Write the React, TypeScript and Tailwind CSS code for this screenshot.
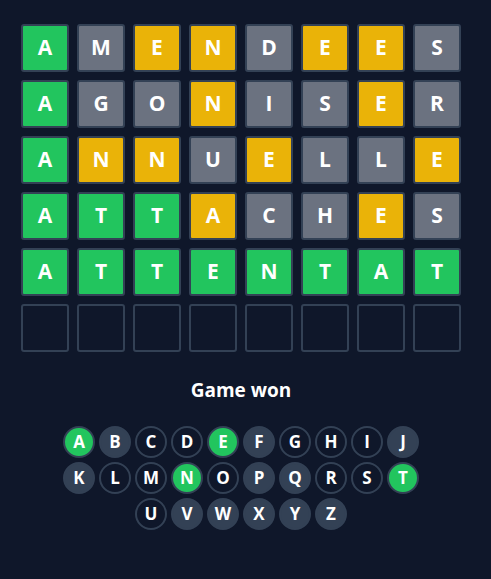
import React from "react";

type S = "g" | "y" | "x" | "e";

const rows: { w: string; s: S[] }[] = [
  { w: "AMENDEES", s: ["g", "x", "y", "y", "x", "y", "y", "x"] },
  { w: "AGONISER", s: ["g", "x", "x", "y", "x", "x", "y", "x"] },
  { w: "ANNUELLE", s: ["g", "y", "y", "x", "y", "x", "x", "y"] },
  { w: "ATTACHES", s: ["g", "g", "g", "y", "x", "x", "y", "x"] },
  { w: "ATTENTAT", s: ["g", "g", "g", "g", "g", "g", "g", "g"] },
  { w: "        ", s: ["e", "e", "e", "e", "e", "e", "e", "e"] },
];

const tileBg: Record<S, string> = {
  g: "bg-[#22c55e]",
  y: "bg-[#eab308]",
  x: "bg-[#6b7280]",
  e: "bg-transparent",
};

type K = "g" | "o" | "f";
const kb: [string, K][][] = [
  [["A", "g"], ["B", "f"], ["C", "o"], ["D", "o"], ["E", "g"], ["F", "f"], ["G", "o"], ["H", "o"], ["I", "o"], ["J", "f"]],
  [["K", "f"], ["L", "o"], ["M", "o"], ["N", "g"], ["O", "o"], ["P", "f"], ["Q", "f"], ["R", "o"], ["S", "o"], ["T", "g"]],
  [["U", "o"], ["V", "f"], ["W", "f"], ["X", "f"], ["Y", "f"], ["Z", "f"]],
];

const keyBg: Record<K, string> = {
  g: "bg-[#22c55e]",
  o: "bg-transparent",
  f: "bg-[#334155]",
};

export default function App() {
  return (
    <div
      className="min-h-screen bg-[#0f172a] pt-[24px] text-white"
      style={{ fontFamily: '"Open Sans", "Noto Sans", sans-serif' }}
    >
      <div className="ml-[21px] w-[440px] flex flex-col">
        <div className="flex flex-col gap-2">
          {rows.map((r, i) => (
            <div key={i} className="flex gap-2">
              {r.s.map((s, j) => (
                <div
                  key={j}
                  className={`w-12 h-12 rounded-[3px] border-2 border-[#334155] flex items-center justify-center text-[21px] font-bold ${tileBg[s]}`}
                >
                  {r.w[j].trim()}
                </div>
              ))}
            </div>
          ))}
        </div>
        <p className="mt-6 text-center text-[19px] leading-7 font-bold">Game won</p>
        <div className="mt-[22px] flex flex-col items-center gap-1">
          {kb.map((row, i) => (
            <div key={i} className="flex gap-1">
              {row.map(([l, k]) => (
                <div
                  key={l}
                  className={`w-8 h-8 rounded-full border-2 border-[#334155] flex items-center justify-center text-[17px] font-bold ${keyBg[k]}`}
                >
                  {l}
                </div>
              ))}
            </div>
          ))}
        </div>
      </div>
    </div>
  );
}
